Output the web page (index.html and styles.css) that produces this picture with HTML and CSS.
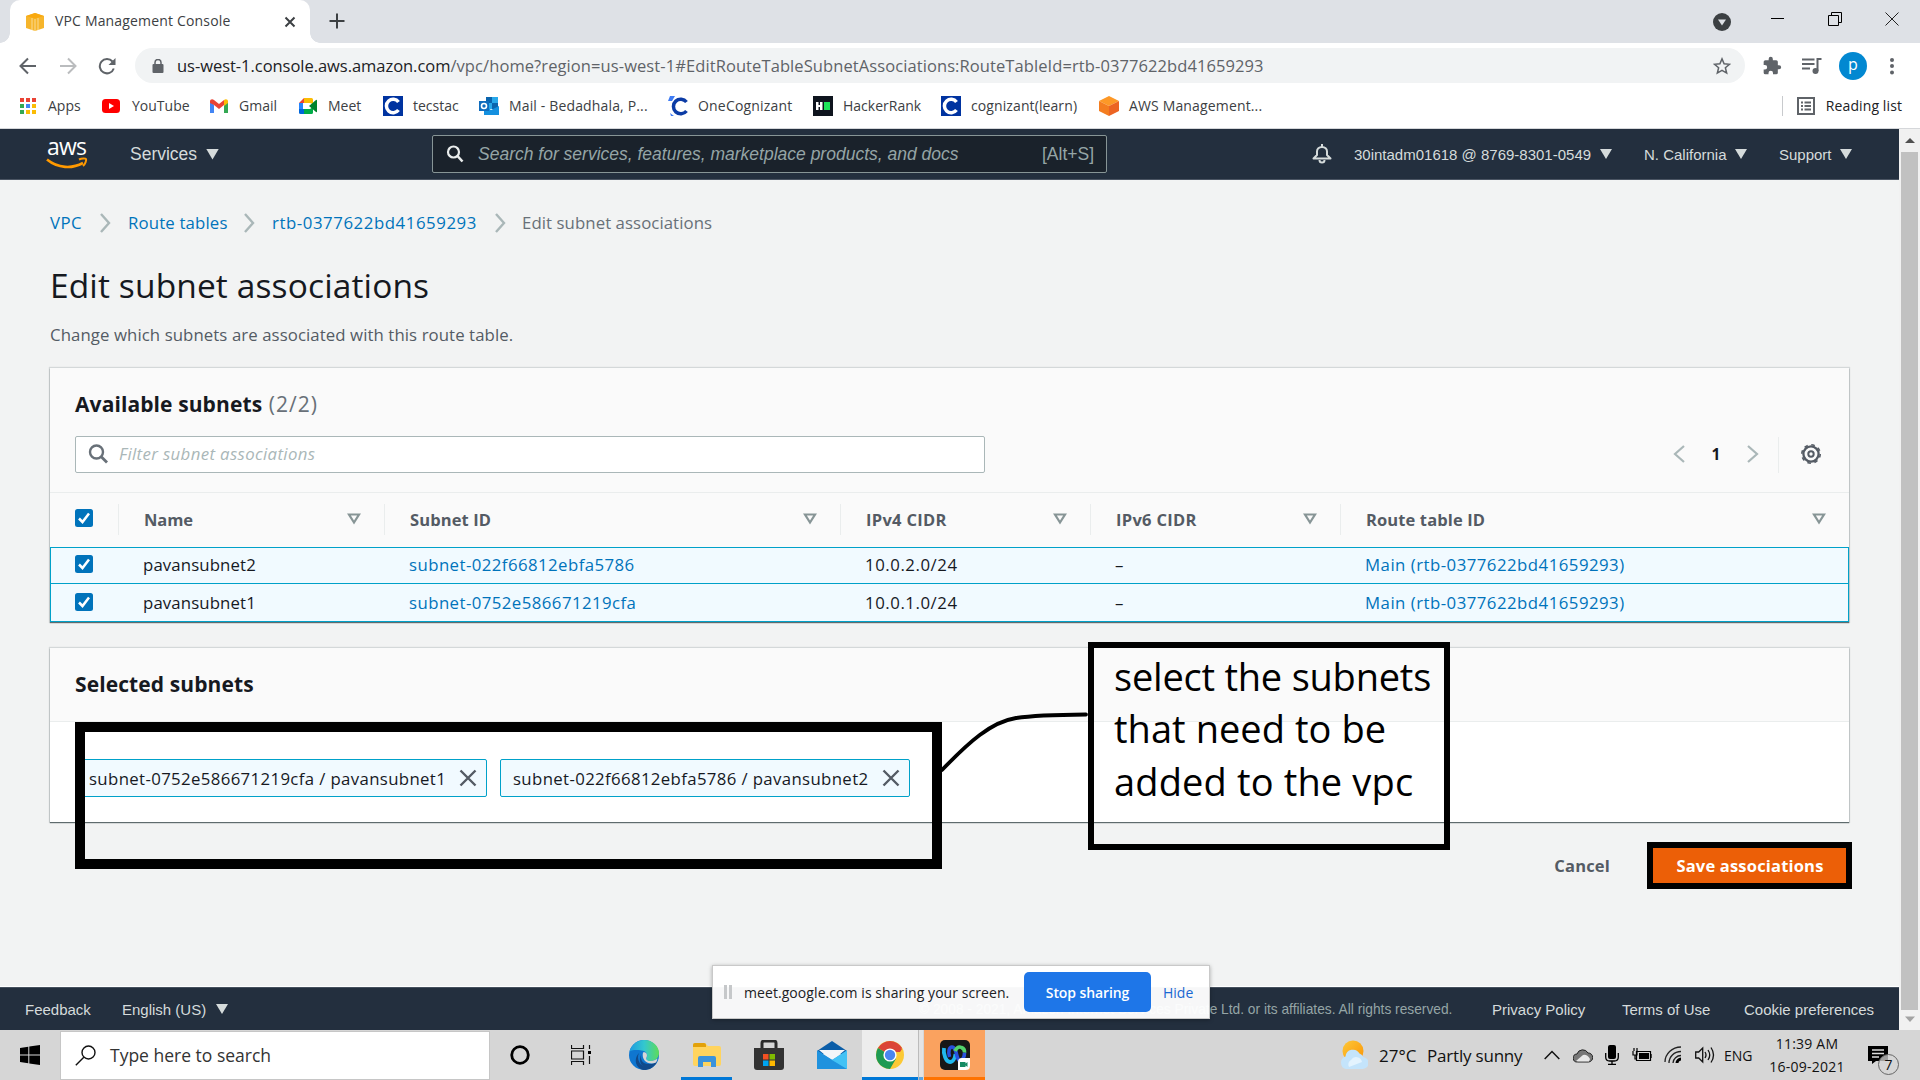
FILE: index.html
```html
<!DOCTYPE html>
<html lang="en">
<head>
<meta charset="utf-8">
<title>VPC Management Console</title>
<link rel="stylesheet" href="styles.css">
</head>
<body>
<div class="tabstrip">
  <div class="tab">
    <svg class="favicon" width="18" height="18" viewBox="0 0 18 18"><path d="M0 3 9 0l9 3v12l-9 3-9-3z" fill="#f6b52c"/><path d="M0 3 9 5.500 18 3 9 0z" fill="#f9a90f"/><path d="M9 6v12M6 5v12M12 5v12" stroke="#fde6b0" stroke-width=".8"/></svg>
    <span class="tab-title">VPC Management Console</span>
    <svg class="tab-close" width="12" height="12" viewBox="0 0 12 12"><path d="M1.500 1.500l9 9m0-9l-9 9" stroke="#3c4043" stroke-width="2"/></svg>
  </div>
  <svg class="newtab" width="16" height="16" viewBox="0 0 16 16"><path d="M8 .5v15M.5 8h15" stroke="#3c4043" stroke-width="2"/></svg>
  <div class="winctl">
    <svg width="18" height="18" viewBox="0 0 18 18"><circle cx="9" cy="9" r="9" fill="#3c4043"/><path d="M5 6.500h8L9 12.500z" fill="#dee1e6"/></svg>
    <svg width="14" height="14" viewBox="0 0 14 14"><path d="M0 6.500h13" stroke="#000"/></svg>
    <svg width="14" height="14" viewBox="0 0 14 14"><path d="M.5 3.500h10v10H.5zM3.500 3V.5h10v10H11" fill="none" stroke="#000"/></svg>
    <svg width="14" height="14" viewBox="0 0 14 14"><path d="M.5.500l13 13m0-13l-13 13" stroke="#222"/></svg>
  </div>
</div>

<div class="toolbar">
  <svg class="nav-back" width="18" height="18" viewBox="0 0 18 18"><path d="M17 9H2M9 1.500L1.500 9 9 16.500" fill="none" stroke="#5f6368" stroke-width="2"/></svg>
  <svg class="nav-fwd" width="18" height="18" viewBox="0 0 18 18"><path d="M1 9h15M9 1.500L16.500 9 9 16.500" fill="none" stroke="#babcbe" stroke-width="2"/></svg>
  <svg class="nav-reload" width="18" height="18" viewBox="0 0 18 18"><path d="M15.800 11.500A7.200 7.200 0 1 1 14.500 4.500" fill="none" stroke="#5f6368" stroke-width="2"/><path d="M17.500 1v7h-7z" fill="#5f6368"/></svg>
  <div class="omnibox">
    <svg width="12" height="14" viewBox="0 0 12 14"><rect x=".5" y="5" width="11" height="9" rx="1" fill="#5f6368"/><path d="M3 6V3.500a3 3 0 0 1 6 0V6" fill="none" stroke="#5f6368" stroke-width="1.500"/></svg>
    <div class="url"><span class="host">us-west-1.console.aws.amazon.com</span><span class="path">/vpc/home?region=us-west-1#EditRouteTableSubnetAssociations:RouteTableId=rtb-0377622bd41659293</span></div>
    <svg class="star" width="18" height="18" viewBox="0 0 24 24"><path d="M12 2.500l2.800 6.600 7.200.6-5.500 4.700 1.700 7-6.200-3.700-6.200 3.700 1.700-7L2 9.700l7.200-.6z" fill="none" stroke="#5f6368" stroke-width="2"/></svg>
  </div>
  <svg class="ext" width="20" height="20" viewBox="0 0 24 24"><path d="M20.500 11H19V7a2 2 0 0 0-2-2h-4V3.500a2.500 2.500 0 0 0-5 0V5H4a2 2 0 0 0-2 2v3.800h1.500a2.700 2.700 0 0 1 0 5.400H2V20a2 2 0 0 0 2 2h3.800v-1.500a2.700 2.700 0 0 1 5.400 0V22H17a2 2 0 0 0 2-2v-4h1.500a2.500 2.500 0 0 0 0-5z" fill="#5f6368"/></svg>
  <svg class="media" width="20" height="18" viewBox="0 0 20 18"><path d="M0 2.500h12.500M0 7h12.500M0 11.500h8M15.500 14V2h4" fill="none" stroke="#5f6368" stroke-width="2"/><circle cx="13.500" cy="14" r="3" fill="#5f6368"/></svg>
  <div class="avatar">p</div>
  <svg class="dots" width="6" height="18" viewBox="0 0 6 18"><g fill="#5f6368"><circle cx="3" cy="3" r="2"/><circle cx="3" cy="9" r="2"/><circle cx="3" cy="15.500" r="2"/></g></svg>
</div>

<div class="bookmarks">
  <div class="bm bm-apps"><svg width="18" height="18" viewBox="0 0 18 18"><g fill="#ea4335"><path d="M1 1h4v4H1zM7 1h4v4H7zM13 1h4v4h-4z"/></g><path d="M1 7h4v4H1z" fill="#34a853"/><path d="M7 7h4v4H7z" fill="#4285f4"/><path d="M13 7h4v4h-4zM7 13h4v4H7zM13 13h4v4h-4z" fill="#fbbc04"/><path d="M1 13h4v4H1z" fill="#34a853"/></svg><span>Apps</span></div>
  <div class="bm bm-yt"><svg width="20" height="20" viewBox="0 0 20 20"><rect x="1" y="3" width="18" height="14" rx="3.500" fill="#f00"/><path d="M8 7v6l5-3z" fill="#fff"/></svg><span>YouTube</span></div>
  <div class="bm bm-gm"><svg width="20" height="20" viewBox="0 0 20 20"><path d="M1 5v12h4V9z" fill="#4285f4"/><path d="M19 5v12h-4V9z" fill="#34a853"/><path d="M1 5.500C1 3 3.500 2.500 5 4l5 4 5-4v5l-5 4-5-4-4-2z" fill="#ea4335"/><path d="M15 4c1.500-1.500 4-1 4 1.500V7l-4 3z" fill="#fbbc04"/></svg><span>Gmail</span></div>
  <div class="bm bm-meet"><svg width="20" height="20" viewBox="0 0 20 20"><path d="M1 7l5-5v5z" fill="#ea4335"/><path d="M6 2h7.500q1.500 0 1.500 1.500V8l-3-1H6z" fill="#fbbc04"/><path d="M1 7h4v6H1z" fill="#2684fc"/><path d="M1 13h5v5H2.500Q1 18 1 16.500z" fill="#0066da"/><path d="M6 13h6l3-2v5.500q0 1.500-1.500 1.500H6z" fill="#00ac47"/><path d="M11 10l7-6q1-.5 1 .5v11q0 1-1 .5z" fill="#00832d"/></svg><span>Meet</span></div>
  <div class="bm bm-tec"><svg width="20" height="20" viewBox="0 0 20 20"><path d="M0 0h20v20H0z" fill="#0033a0"/><path d="M15.500 6A6.700 6.700 0 1 0 15.500 14" fill="none" stroke="#fff" stroke-width="3.500"/></svg><span>tecstac</span></div>
  <div class="bm bm-mail"><svg width="20" height="20" viewBox="0 0 20 20"><path d="M7 1h12v12H7z" fill="#28a8ea"/><path d="M7 1h6v6H7z" fill="#0a64ad"/><path d="M13 7h6v6h-6z" fill="#0a64ad"/><path d="M5 9l7 5 8-4v9H5z" fill="#1490df"/><path d="M0 5h10v10H0z" fill="#0f6cbd"/><circle cx="5" cy="10" r="2.500" fill="none" stroke="#fff" stroke-width="1.600"/></svg><span>Mail - Bedadhala, P...</span></div>
  <div class="bm bm-one"><svg width="20" height="20" viewBox="0 0 20 20"><path d="M18.500 6A7.300 7.300 0 1 0 18.500 15" fill="none" stroke="#0b3ba5" stroke-width="3.500"/><path d="M2 0h5L4 5H0zM2 17l4 3H3z" fill="#3f7cf4"/></svg><span>OneCognizant</span></div>
  <div class="bm bm-hack"><svg width="20" height="20" viewBox="0 0 20 20"><path d="M0 0h20v20H0z" fill="#0e141e"/><path d="M3 6h2.500v3H7V6h2.500v8H7v-3H5.500v3H3z" fill="#fff"/><path d="M11 6h6v8h-6z" fill="#1ee35a"/></svg><span>HackerRank</span></div>
  <div class="bm bm-cog"><svg width="20" height="20" viewBox="0 0 20 20"><path d="M0 0h20v20H0z" fill="#0033a0"/><path d="M15.500 6A6.700 6.700 0 1 0 15.500 14" fill="none" stroke="#fff" stroke-width="3.500"/></svg><span>cognizant(learn)</span></div>
  <div class="bm bm-aws"><svg width="20" height="20" viewBox="0 0 20 20"><path d="M10 0l10 5-10 5L0 5z" fill="#fd9827"/><path d="M0 5l10 5v10L0 15z" fill="#f47d20"/><path d="M20 5l-10 5v10l10-5z" fill="#ec6423"/></svg><span>AWS Management...</span></div>
  <div class="reading"><svg width="18" height="18" viewBox="0 0 18 18"><path d="M1 1h16v16H1z" fill="none" stroke="#5f6368" stroke-width="2"/><path d="M4 5.500h2M4 9h2M4 12.500h2M7.500 5.500H14M7.500 9H14M7.500 12.500H14" stroke="#5f6368" stroke-width="1.800"/></svg><span>Reading list</span></div>
</div>

<div class="viewport">
  <div class="page">
    <header class="awsbar">
      <div class="logo"><span>aws</span><svg width="42" height="13" viewBox="0 0 42 13"><path d="M1 2.500C12 11.500 26 12 37 6" fill="none" stroke="#ff9900" stroke-width="2.600"/><path d="M33 2.500c3-1.500 6.500-1.300 7-.5.500 1-.5 5-3 7" fill="none" stroke="#ff9900" stroke-width="2"/></svg></div>
      <div class="services">Services</div><i class="tri big"></i>
      <div class="search">
        <svg width="18" height="18" viewBox="0 0 18 18"><circle cx="7.500" cy="7" r="5.500" fill="none" stroke="#eaeded" stroke-width="2.200"/><path d="M11.500 11l5 5.500" stroke="#eaeded" stroke-width="2.600"/></svg>
        <span class="ph">Search for services, features, marketplace products, and docs</span><span class="key">[Alt+S]</span>
      </div>
      <svg class="bell" width="20" height="20" viewBox="0 0 20 20"><path d="M1.500 14.500h17L15 11V7.500C15 5 13 3 10 3S5 5 5 7.500V11z" fill="none" stroke="#d5dbdb" stroke-width="2" stroke-linejoin="round"/><path d="M10 3V0M7.500 16a2.500 2.500 0 0 0 5 0" fill="none" stroke="#d5dbdb" stroke-width="2"/></svg>
      <div class="menu m-acct">30intadm01618 @ 8769-8301-0549</div><i class="tri"></i>
      <div class="menu m-reg">N. California</div><i class="tri"></i>
      <div class="menu m-sup">Support</div><i class="tri"></i>
    </header>

    <main class="content">
      <nav class="crumbs">
        <a class="c1">VPC</a><svg width="12" height="20" viewBox="0 0 12 20"><path d="M2 1l8 9-8 9" fill="none" stroke="#aab7b8" stroke-width="2.400"/></svg>
        <a class="c2">Route tables</a><svg width="12" height="20" viewBox="0 0 12 20"><path d="M2 1l8 9-8 9" fill="none" stroke="#aab7b8" stroke-width="2.400"/></svg>
        <a class="c3">rtb-0377622bd41659293</a><svg width="12" height="20" viewBox="0 0 12 20"><path d="M2 1l8 9-8 9" fill="none" stroke="#aab7b8" stroke-width="2.400"/></svg>
        <span class="c4">Edit subnet associations</span>
      </nav>
      <h1>Edit subnet associations</h1>
      <p class="desc">Change which subnets are associated with this route table.</p>

      <section class="card available">
        <div class="card-head">
          <h2>Available subnets <span class="count">(2/2)</span></h2>
          <div class="tools">
            <div class="filter"><svg width="20" height="20" viewBox="0 0 20 20"><circle cx="8.500" cy="8" r="6.500" fill="none" stroke="#687078" stroke-width="2.400"/><path d="M13 12.500l6 6" stroke="#687078" stroke-width="2.800"/></svg><span>Filter subnet associations</span></div>
            <div class="pager">
              <svg width="12" height="18" viewBox="0 0 12 18"><path d="M11 1L2 9l9 8" fill="none" stroke="#aab7b8" stroke-width="2.200"/></svg>
              <b>1</b>
              <svg width="12" height="18" viewBox="0 0 12 18"><path d="M1 1l9 8-9 8" fill="none" stroke="#aab7b8" stroke-width="2.200"/></svg>
            </div>
            <div class="gear"><svg width="22" height="22" viewBox="0 0 22 22"><g fill="none" stroke="#545b64"><circle cx="11" cy="11" r="7.600" stroke-width="2.300"/><circle cx="11" cy="11" r="9.200" stroke-width="1.600" stroke-dasharray="3.613 3.613"/><circle cx="11" cy="11" r="2.700" stroke-width="2"/></g></svg></div>
          </div>
        </div>
        <div class="row thead">
          <div class="check"><svg width="18" height="18" viewBox="0 0 18 18"><rect width="18" height="18" rx="2.500" fill="#0073bb"/><path d="M4 9.500L7.500 13 14 4.500" fill="none" stroke="#fff" stroke-width="2.500"/></svg></div>
          <div class="th"><span class="h-name">Name</span><svg class="sort" width="14" height="12" viewBox="0 0 14 12"><path d="M2 1.500h10L7 9.500z" fill="none" stroke="#879596" stroke-width="2.200"/></svg></div>
          <div class="th"><span>Subnet ID</span><svg class="sort" width="14" height="12" viewBox="0 0 14 12"><path d="M2 1.500h10L7 9.500z" fill="none" stroke="#879596" stroke-width="2.200"/></svg></div>
          <div class="th"><span class="h-cidr">IPv4 CIDR</span><svg class="sort" width="14" height="12" viewBox="0 0 14 12"><path d="M2 1.500h10L7 9.500z" fill="none" stroke="#879596" stroke-width="2.200"/></svg></div>
          <div class="th"><span class="h-cidr">IPv6 CIDR</span><svg class="sort" width="14" height="12" viewBox="0 0 14 12"><path d="M2 1.500h10L7 9.500z" fill="none" stroke="#879596" stroke-width="2.200"/></svg></div>
          <div class="th"><span>Route table ID</span><svg class="sort" width="14" height="12" viewBox="0 0 14 12"><path d="M2 1.500h10L7 9.500z" fill="none" stroke="#879596" stroke-width="2.200"/></svg></div>
        </div>
        <div class="row trow first">
          <div class="check"><svg width="18" height="18" viewBox="0 0 18 18"><rect width="18" height="18" rx="2.500" fill="#0073bb"/><path d="M4 9.500L7.500 13 14 4.500" fill="none" stroke="#fff" stroke-width="2.500"/></svg></div>
          <div class="td name">pavansubnet2</div><a class="td sid">subnet-022f66812ebfa5786</a><div class="td cidr">10.0.2.0/24</div><div class="td dash">–</div><a class="td rt">Main (rtb-0377622bd41659293)</a>
        </div>
        <div class="row trow">
          <div class="check"><svg width="18" height="18" viewBox="0 0 18 18"><rect width="18" height="18" rx="2.500" fill="#0073bb"/><path d="M4 9.500L7.500 13 14 4.500" fill="none" stroke="#fff" stroke-width="2.500"/></svg></div>
          <div class="td name">pavansubnet1</div><a class="td sid">subnet-0752e586671219cfa</a><div class="td cidr">10.0.1.0/24</div><div class="td dash">–</div><a class="td rt">Main (rtb-0377622bd41659293)</a>
        </div>
      </section>

      <section class="card selected">
        <div class="sel-head"><h2>Selected subnets</h2></div>
        <div class="tokens">
          <div class="token"><span>subnet-0752e586671219cfa / pavansubnet1</span><svg width="18" height="18" viewBox="0 0 18 18"><path d="M1.500 1.500l15 15m0-15l-15 15" stroke="#545b64" stroke-width="2.400"/></svg></div>
          <div class="token two"><span>subnet-022f66812ebfa5786 / pavansubnet2</span><svg width="18" height="18" viewBox="0 0 18 18"><path d="M1.500 1.500l15 15m0-15l-15 15" stroke="#545b64" stroke-width="2.400"/></svg></div>
        </div>
      </section>

      <div class="actions"><span class="cancel">Cancel</span><div class="save"><span>Save associations</span></div></div>
    </main>

    <footer class="foot">
      <span class="f-feed">Feedback</span><span class="f-lang">English (US)</span><i class="tri"></i>
      <span class="f-copy">© 2008 - 2021, Amazon Internet Services Private Ltd. or its affiliates. All rights reserved.</span>
      <span class="f-priv">Privacy Policy</span><span class="f-terms">Terms of Use</span><span class="f-cook">Cookie preferences</span>
    </footer>
  </div>
  <div class="scrollbar"><svg width="21" height="23" viewBox="0 0 21 23"><path d="M6 14h10l-5-5z" fill="#505050"/></svg><div class="thumb"></div><svg width="21" height="20" viewBox="0 0 21 20"><path d="M6 6.500h10l-5 5.500z" fill="#a3a3a3"/></svg></div>
</div>

<div class="taskbar">
  <div class="start"><svg width="20" height="20" viewBox="0 0 20 20"><path d="M0 3l8.300-1.200v7.700H0zM9.300 1.600L20 0v9.500H9.300zM0 10.500h8.300v7.700L0 17zM9.300 10.500H20V20L9.300 18.400z"/></svg></div>
  <div class="tsearch"><svg width="21" height="21" viewBox="0 0 21 21"><circle cx="13.500" cy="7.500" r="6.500" fill="none" stroke="#111" stroke-width="1.400"/><path d="M8.800 12.200L.8 20.200" stroke="#111" stroke-width="1.400"/></svg><span>Type here to search</span></div>
  <div class="tb cortana"><svg width="20" height="20" viewBox="0 0 20 20"><circle cx="10" cy="10" r="8.300" fill="none" stroke="#000" stroke-width="2.800"/></svg></div>
  <div class="tb tview"><svg width="20" height="20" viewBox="0 0 20 20"><path d="M.5 0v3.500h12V0M.5 20v-3.500h12V20M.5 6h12v8H.5zM18.500 0v4M18.500 11v8" fill="none" stroke="#111" stroke-width="1.200"/><path d="M17 6h3v3h-3z"/></svg></div>
  <div class="tb edge"><svg width="30" height="30" viewBox="0 0 30 30"><defs><linearGradient id="eg" x1="0" x2="1"><stop offset="0" stop-color="#1e9be0"/><stop offset=".5" stop-color="#33c7cf"/><stop offset="1" stop-color="#5edc58"/></linearGradient></defs><circle cx="15" cy="15" r="15" fill="#0f76d0"/><path d="M.3 12C2 5 8 0 15 0c9 0 15 6.500 15 13 0 5-4 8-8.500 8-3.500 0-5-1.500-4-3 2-3-.5-7.500-5-7.500C7 9.500 2 10 .3 12z" fill="url(#eg)"/><path d="M10 13c-3 6 1 14 9 14 4 0 6-1 8-3.500C24 28 20 30 15 30 7 29 4 19 10 13z" fill="#114a8b"/><path d="M12.500 14c-2 5 1 10 7 10 3 0 6-.5 8.500-3l-1 3c-3 3-6 3.500-9 3.500-6 0-9-7-5.500-13.500z" fill="#114a8b"/><path d="M14 12.500c3-1 5 2 3.500 5-1 1.700.5 3.500 4 3.500 3 0 5-1 7-2.500-.3 1.700-.8 3-1.500 4-7 3.500-15-2-13-10z" fill="#d6d6d6"/></svg></div>
  <div class="tb running"><svg width="28" height="24" viewBox="0 0 28 24"><path d="M0 2q0-2 2-2h10l3 3h11q2 0 2 2v16q0 2-2 2H2q-2 0-2-2z" fill="#ffd45e"/><path d="M0 2q0-2 2-2h9q2 0 2 2v2H0z" fill="#e2a10a"/><path d="M5 24v-9q0-2 2-2h14q2 0 2 2v9h-5v-5h-8v5z" fill="#3b93dc"/></svg></div>
  <div class="tb store"><svg width="30" height="30" viewBox="0 0 30 30"><path d="M8 9V3q0-2 2-2h10q2 0 2 2v6" fill="none" stroke="#2b2b2b" stroke-width="3"/><path d="M0 8h30v19q0 3-3 3H3q-3 0-3-3z" fill="#333"/><path d="M9 14h5.500v5.500H9z" fill="#f25022"/><path d="M15.500 14H21v5.500h-5.500z" fill="#7fba00"/><path d="M9 20.500h5.500V26H9z" fill="#00a4ef"/><path d="M15.500 20.500H21V26h-5.500z" fill="#ffb900"/></svg></div>
  <div class="tb mail"><svg width="30" height="28" viewBox="0 0 30 28"><path d="M0 10L15 0l15 10v3H0z" fill="#0c5ea8"/><path d="M2 9h26L15 20z" fill="#f3f6f9"/><path d="M0 9.500l15 9.500L30 9.500V28H0z" fill="#2fa5e8"/><path d="M0 9.500V28h30z" fill="#1f92de"/><path d="M30 9.500V28L15 19z" fill="#42c2f5"/></svg></div>
  <div class="tb chrome"><svg width="28" height="28" viewBox="0 0 28 28"><circle cx="14" cy="14" r="14" fill="#fcc934"/><path d="M14 14L1.900 7A14 14 0 0 1 26.100 7z" fill="#db4437"/><path d="M14 7.400h12.300L24 11H14z" fill="#db4437"/><path d="M1.900 7A14 14 0 0 0 14 28l6.100-10.500L14 14z" fill="#1e9a52"/><circle cx="14" cy="14" r="6.600" fill="#fff"/><circle cx="14" cy="14" r="5.200" fill="#4a86f0"/></svg></div>
  <div class="stack"></div>
  <div class="tb webex"><svg width="30" height="30" viewBox="0 0 30 30"><rect width="30" height="30" rx="5" fill="#171717"/><path d="M4 8c-1 6 2 14 6 14 3 0 5-4 5.500-8" fill="none" stroke="#21b8ee" stroke-width="3.800"/><path d="M9.500 17c-1.500-5-.5-10 2.500-10s4 5 5 9 2.500 5.500 4 4.500 3.500-4 3.500-8" fill="none" stroke="#2851dd" stroke-width="3.600"/><path d="M15 11c2-4 4.500-4.500 6.500-3.500 2 .8 3.200 2.500 3 5" fill="none" stroke="#52d36d" stroke-width="3.600"/><path d="M18 22q0-4 4-4h8v8q0 4-4 4h-8z" fill="#fff"/><path d="M20 22h5.500v5H20zM25 24l2.500-2v5L25 25z" fill="#168a63"/></svg></div>
  <div class="weather"><svg width="28" height="30" viewBox="0 0 28 30"><defs><linearGradient id="sun" x1="0" y1="0" x2="1" y2="1"><stop offset="0" stop-color="#fdc83a"/><stop offset="1" stop-color="#fb9404"/></linearGradient></defs><circle cx="13" cy="11" r="10.500" fill="url(#sun)"/><path d="M6 29a6.500 6.500 0 0 1-.5-12.500 7.500 7.500 0 0 1 14-3A6 6 0 0 1 23 17a6 6 0 0 1-1 12z" fill="#c4e4fb"/><path d="M9 27a5 5 0 0 1 2-7 6 6 0 0 1 11 2z" fill="#e3f3fe"/></svg><span class="w1">27°C</span><span class="w2">Partly sunny</span></div>
  <div class="tray">
    <svg width="16" height="10" viewBox="0 0 16 10"><path d="M.7 9L8 1.500 15.300 9" fill="none" stroke="#111" stroke-width="1.500"/></svg>
    <svg width="20" height="15" viewBox="0 0 20 15"><path d="M4.500 14A4 4 0 0 1 4 6a6 6 0 0 1 11-1 4.500 4.500 0 0 1 .5 9z" fill="#777" stroke="#222"/><path d="M3 13l7-6q4-1 7 4l-1 2.500H5z" fill="#e8e8e8"/></svg>
    <svg width="14" height="20" viewBox="0 0 14 20"><rect x="3" width="8" height="14" rx="2"/><path d="M.7 8v4q0 4 4 4h4.600q4 0 4-4V8M7 16v3M3 19.300h8" fill="none" stroke="#000" stroke-width="1.300"/></svg>
    <svg width="20" height="14" viewBox="0 0 20 14"><path d="M4.500 3.500h14v9h-14zM20 6v4M1 3v4h4V3M2 0v3M5 0v3M3 7v4h2" fill="none" stroke="#000" stroke-width="1.200"/><path d="M7 5h10v6H7z"/></svg>
    <svg width="18" height="18" viewBox="0 0 18 18"><path d="M1 16C1 8 8 1 17 1M5 17C5 11 10 5.500 17 5.500M9 17c0-4 4-7.500 8-7.500" fill="none" stroke="#222" stroke-width="1.300"/><path d="M13 17c0-2 2-4 4-4" stroke="#000" stroke-width="3" fill="none"/></svg>
    <svg width="20" height="18" viewBox="0 0 20 18"><path d="M.7 6h3l4-4v14l-4-4h-3zM10 6q2 3 0 6M13 4q3.500 5 0 10M16 1.500q5 7.500 0 15" fill="none" stroke="#111" stroke-width="1.300"/></svg>
  </div>
  <span class="lang">ENG</span>
  <div class="clock"><span class="k1">11:39 AM</span><span class="k2">16-09-2021</span></div>
  <div class="notif"><svg width="20" height="18" viewBox="0 0 20 18"><path d="M0 0h20v15H8l-4 3v-3H0z"/><path d="M4 4h12M4 7.500h12M4 11h7" stroke="#ddd" stroke-width="1.300"/></svg><span class="badge">7</span></div>
</div>

<div class="mark mark-tokens"></div>
<svg class="mark-line" width="150" height="64" viewBox="0 0 150 64"><path d="M1 59C28 31 50 11 75 7Q95 4 145 3.500" fill="none" stroke="#000" stroke-width="3.800" stroke-linecap="round"/></svg>
<div class="mark mark-note"><span class="n1">select the subnets</span><span class="n2">that need to be</span><span class="n3">added to the vpc</span></div>
<div class="mark mark-save"></div>

<div class="share"><i class="grip"></i><span class="s-text">meet.google.com is sharing your screen.</span><span class="s-stop"><b>Stop sharing</b></span><span class="s-hide">Hide</span></div>
</body>
</html>
```
FILE: styles.css
```css
* { box-sizing: border-box; }
html, body { margin: 0; width: 1920px; height: 1080px; overflow: hidden; }
body { position: relative; display: flex; flex-direction: column; background: #fff; font-family: "Open Sans", sans-serif; color: #16191f; white-space: nowrap; }
svg { display: block; flex: none; }
h1, h2, p { margin: 0; }

/* browser tabs */
.tabstrip { display: flex; height: 43px; background: #dee1e6; padding-left: 10px; flex: none; }
.tab { position: relative; width: 300px; height: 43px; background: #fff; border-radius: 10px 10px 0 0; display: flex; align-items: center; padding-left: 16px; }
.tab::before, .tab::after { content: ""; position: absolute; bottom: 0; width: 10px; height: 10px; }
.tab::before { left: -10px; background: radial-gradient(circle at 0 0, #dee1e6 9.500px, #fff 10px); }
.tab::after { right: -10px; background: radial-gradient(circle at 100% 0, #dee1e6 9.500px, #fff 10px); }
.tab-title { width: 229px; flex: none; margin-left: 11px; padding-bottom: 2px; font-size: 14px; color: #3c4043; letter-spacing: .17px; }
.newtab { margin: 13px 0 0 19px; }
.winctl { margin-left: auto; display: flex; align-items: flex-start; padding: 12px 21px 0 0; gap: 43px; }
.winctl svg:first-child { margin: 1px -3px 0 0; }

/* address bar */
.toolbar { display: flex; align-items: center; height: 45px; padding-left: 19px; flex: none; }
.nav-fwd { margin-left: 22px; }
.nav-reload { margin-left: 21px; }
.omnibox { margin-left: 19px; width: 1610px; height: 35px; border-radius: 18px; background: #f1f3f4; display: flex; align-items: center; padding: 0 14px 0 17px; }
.url { margin-left: 13px; width: 1530px; font-size: 16.500px; }
.host { color: #202124; letter-spacing: -.04px; }
.path { color: #5f6368; letter-spacing: .09px; }
.star { margin-left: auto; }
.ext { margin-left: 17px; }
.media { margin-left: 20px; }
.avatar { margin-left: 17px; width: 28px; height: 28px; border-radius: 50%; background: #0288d1; color: #fff; font-size: 16px; line-height: 25px; text-align: center; }
.dots { margin-left: 22px; }

/* bookmarks */
.bookmarks { display: flex; align-items: center; height: 41px; padding: 0 0 5px 19px; border-bottom: 1px solid #d5d7da; font-size: 14px; color: #3c4043; flex: none; }
.bm { display: flex; align-items: center; gap: 10px; }
.bm-apps { width: 82px; gap: 11px; }
.bm-yt { width: 108px; gap: 11px; }
.bm-gm { width: 89px; }
.bm-meet { width: 85px; }
.bm-tec { width: 96px; }
.bm-mail { width: 189px; letter-spacing: .15px; }
.bm-one { width: 145px; letter-spacing: .18px; }
.bm-hack { width: 128px; }
.bm-cog { width: 158px; letter-spacing: .1px; }
.bm-aws { width: 178px; letter-spacing: .15px; }
.reading { margin-left: auto; height: 20px; border-left: 1px solid #c8cacd; padding: 0 18px 0 14px; display: flex; align-items: center; gap: 11px; color: #202124; letter-spacing: .1px; }

.viewport { display: flex; flex: 1; min-height: 0; }
.page { width: 1899px; display: flex; flex-direction: column; background: #f2f3f3; }
.scrollbar { width: 21px; background: #f1f1f1; display: flex; flex-direction: column; }
.thumb { flex: 1; margin: 0 2px; background: #c1c1c1; }

/* console header */
.awsbar { display: flex; align-items: center; height: 51px; background: #232f3e; border-bottom: 1px solid #4b5563; color: #d5dbdb; font-family: "Liberation Sans", Arial, sans-serif; flex: none; }
.tri { width: 12px; height: 10px; background: #d5dbdb; clip-path: polygon(0 0, 100% 0, 50% 100%); flex: none; }
.tri.big { width: 13px; height: 11px; }
.logo { width: 84px; height: 51px; margin-left: 46px; padding-top: 6px; color: #fff; font: 500 23px/22px "Open Sans", sans-serif; }
.logo span { display: block; margin-left: 1px; letter-spacing: -.8px; }
.services { width: 76px; font-size: 17.500px; }
.search { margin-left: 213px; width: 675px; height: 38px; background: #1a222b; border: 1px solid #879596; border-radius: 2px; display: flex; align-items: center; padding: 0 12px 0 13px; font-size: 17.500px; color: #95a5a6; }
.ph { margin-left: 14px; font-style: italic; }
.key { margin-left: auto; }
.bell { margin-left: 205px; }
.menu { font-size: 15px; }
.m-acct { margin-left: 22px; width: 246px; }
.m-reg { margin-left: 32px; width: 91px; }
.m-sup { margin-left: 32px; width: 61px; }

/* page content */
.content { flex: 1; padding: 30px 50px 0 50px; }
.crumbs { display: flex; align-items: center; height: 25px; font-size: 16.800px; color: #687078; }
a { color: #0073bb; }
.c1 { width: 49px; letter-spacing: .4px; }
.c2 { width: 115px; margin-left: 17px; letter-spacing: .15px; }
.c3 { width: 222px; margin-left: 17px; letter-spacing: .57px; }
.c4 { margin-left: 16px; letter-spacing: .07px; }
h1 { margin-top: 30px; font-size: 33.500px; line-height: 40px; font-weight: 400; letter-spacing: .13px; }
.desc { margin-top: 18px; font-size: 16.800px; line-height: 24px; color: #545b64; letter-spacing: .08px; }
.card { background: #fff; box-shadow: 0 1px 1px #5f6b6d, 0 0 1px 1px rgba(0, 28, 36, .12); }
.available { margin-top: 21px; }
.card-head { height: 125px; padding: 21px 0 0 25px; background: #fafafa; border-bottom: 1px solid #eaeded; }
h2 { font-size: 21px; line-height: 30px; font-weight: 700; letter-spacing: .1px; }
.count { font-weight: 400; color: #687078; letter-spacing: 1px; margin-left: 1px; }
.tools { margin-top: 17px; display: flex; align-items: center; }
.filter { width: 910px; height: 37px; background: #fff; border: 1px solid #aab7b8; border-radius: 2px; display: flex; align-items: center; padding: 0 0 2px 12px; gap: 11px; font-size: 16.800px; font-style: italic; color: #aab7b8; letter-spacing: .37px; }
.pager { margin-left: 688px; display: flex; align-items: center; height: 36px; padding-bottom: 2px; }
.pager b { width: 62px; text-align: center; font-size: 15.500px; }
.gear { margin-left: 19px; height: 36px; border-left: 1px solid #eaeded; display: flex; align-items: center; padding: 0 0 2px 21px; }
.row { display: grid; grid-template-columns: 68px 266px 456px 250px 250px 1fr; align-items: center; }
.thead { height: 54px; background: #fafafa; font-size: 16.500px; font-weight: 700; color: #545b64; letter-spacing: .12px; padding-bottom: 2px; }
.h-name { letter-spacing: -.1px; }
.h-cidr { letter-spacing: .3px; }
.check { padding: 0 0 2px 25px; }
.th { height: 31px; border-left: 1px solid #eaeded; padding: 0 23px 0 25px; display: flex; align-items: center; justify-content: space-between; }
.trow { height: 38px; background: #f1faff; border: 1px solid #00a1c9; border-top: 0; font-size: 16.800px; }
.trow .check { padding-left: 24px; }
.trow.first { height: 37px; border-top: 1px solid #00a1c9; padding-bottom: 2px; }
.td { padding-left: 24px; }
.name { letter-spacing: .12px; }
.sid { letter-spacing: .44px; }
.cidr { letter-spacing: .55px; }
.rt { letter-spacing: .48px; }
.selected { margin-top: 26px; }
.sel-head { height: 74px; background: #fafafa; border-bottom: 1px solid #eaeded; padding: 21px 0 0 25px; }
.tokens { height: 100px; padding: 37px 0 0 25px; display: flex; gap: 13px; }
.token { width: 412px; height: 38px; background: #f1faff; border: 1px solid #00a1c9; border-radius: 2px; display: flex; align-items: center; padding: 0 9px 0 13px; justify-content: space-between; font-size: 16.800px; letter-spacing: .36px; }
.token.two { width: 410px; padding-left: 12px; }
.actions { margin-top: 25px; height: 36px; display: flex; align-items: center; justify-content: flex-end; font-size: 16.500px; font-weight: 700; color: #545b64; padding-right: 2px; letter-spacing: .18px; }
.save { margin-left: 43px; width: 194px; height: 35px; background: #ec5f07; color: #fff; display: flex; align-items: center; justify-content: center; }

.foot { height: 43px; background: #232f3e; border-top: 1px solid #46515e; box-shadow: 0 -1px #fff; display: flex; align-items: center; color: #d5dbdb; font: 15px "Liberation Sans", Arial, sans-serif; padding-left: 25px; }
.f-feed { width: 97px; } .f-lang { width: 94px; }
.f-copy { margin-left: 691px; width: 573px; font-size: 13.750px; color: #95a5a6; }
.f-priv { width: 130px; } .f-terms { width: 122px; }

/* taskbar */
.taskbar { display: flex; height: 50px; background: #d6d6d6; flex: none; align-items: center; color: #111; }
.start { width: 60px; padding-left: 20px; }
.tsearch { width: 430px; height: 49px; background: #fff; border: 1px solid #c6c6c6; display: flex; align-items: center; padding-left: 14px; gap: 14px; font-size: 17.500px; color: #333; }
.tb { width: 62px; height: 50px; display: flex; align-items: center; justify-content: center; }
.cortana { width: 60px; }
.tview { width: 61px; }
.edge { width: 66px; }
.running { box-shadow: inset 0 -3px #0078d7; width: 51px; margin: 0 4px; }
.store { width: 65px; }
.mail { width: 61px; }
.chrome { width: 57px; background: #ededed; border-right: 1px solid #bbb; box-shadow: inset 0 -3px #0078d7; }
.stack { width: 4px; height: 50px; margin-right: 1px; background: #e4e4e4; box-shadow: inset 0 -3px #5ea6e0; }
.webex { width: 61px; background: #faa25f; box-shadow: inset 0 -3px #ff7300; }
.weather { margin-left: 355px; display: flex; align-items: center; font-size: 17px; width: 204px; }
.w1 { width: 48px; margin-left: 11px; }
.w2 { letter-spacing: -.2px; }
.tray { display: flex; align-items: center; gap: 12.500px; width: 180px; }
.lang { width: 43px; font-size: 14px; }
.clock { width: 80px; display: flex; flex-direction: column; align-items: center; font-size: 14px; line-height: 23px; margin-bottom: 1px; }
.k1 { letter-spacing: .2px; }
.k2 { letter-spacing: .25px; }
.notif { position: relative; margin-left: 21px; }
.badge { position: absolute; left: 10px; top: 8px; width: 21px; height: 21px; border-radius: 50%; border: 1px solid #666; background: rgba(214, 214, 214, .75); font-size: 14px; line-height: 19px; text-align: center; }

/* hand-drawn markup over the page */
.mark { position: absolute; border: 6px solid #000; }
.mark-tokens { left: 75px; top: 722px; width: 867px; height: 147px; border-width: 10px; }
.mark-note { left: 1088px; top: 642px; width: 362px; height: 208px; padding: 3px 0 0 20px; display: flex; flex-direction: column; color: #000; font-size: 38px; }
.n1 { line-height: 50.500px; letter-spacing: -.22px; }
.n2 { line-height: 52.500px; letter-spacing: .05px; }
.n3 { line-height: 54px; letter-spacing: .15px; }
.mark-save { left: 1647px; top: 842px; width: 205px; height: 47px; }
.mark-line { position: absolute; left: 941px; top: 711px; }

/* screen sharing notice */
.share { position: absolute; left: 712px; top: 965px; width: 498px; height: 54px; background: rgba(255, 255, 255, .965); border: 1px solid #c9c9c9; box-shadow: 0 1px 4px rgba(0, 0, 0, .3); display: flex; align-items: center; font-size: 14px; color: #202124; }
.grip { width: 8px; height: 14px; margin-left: 11px; border: solid #c6c8ca; border-width: 0 3px; }
.s-text { margin-left: 12px; width: 280px; letter-spacing: .07px; }
.s-stop { width: 127px; height: 40px; border-radius: 5px; background: rgba(26, 115, 232, .98); color: #fff; display: flex; align-items: center; justify-content: center; }
.s-stop b { font-weight: 600; letter-spacing: -.1px; }
.s-hide { margin-left: 12px; color: #1967d2; }
```
